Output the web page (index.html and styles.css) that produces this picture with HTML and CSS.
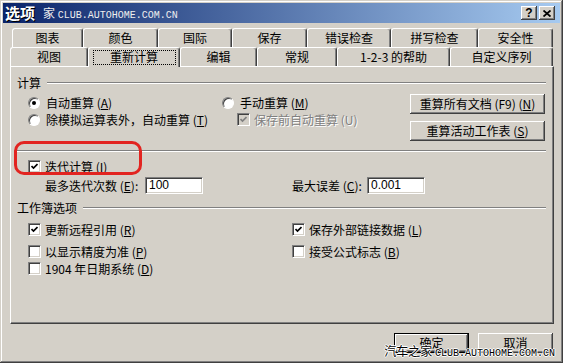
FILE: index.html
```html
<!doctype html>
<html lang="zh-CN">

<head>
    <meta charset="utf-8">
    <title>选项</title>
    <link rel="stylesheet" href="styles.css">
</head>

<body>
    <div class="dialog">
        <div class="titlebar">
            <span class="title">选项</span>
            <span class="wm-top">家 <span class="mono">CLUB.AUTOHOME.COM.CN</span></span>
            <div class="caption_btns">
                <span class="cap_btn">?</span>
                <span class="cap_btn">
                    <svg width="8" height="7" viewBox="0 0 8 7"><path d="M0.5 0.5 L7.5 6.5 M7.5 0.5 L0.5 6.5" stroke="#000" stroke-width="1.8" fill="none"/></svg>
                </span>
            </div>
        </div>

        <div class="tabs">
            <div class="tab_row row1">
                <div class="tab w71">图表</div>
                <div class="tab w75">颜色</div>
                <div class="tab w74">国际</div>
                <div class="tab w75">保存</div>
                <div class="tab w84">错误检查</div>
                <div class="tab w87">拼写检查</div>
                <div class="tab w75">安全性</div>
            </div>
            <div class="tab_row row2">
                <div class="tab w78">视图</div>
                <div class="tab w92 active"><span class="focus">重新计算</span></div>
                <div class="tab w77">编辑</div>
                <div class="tab w80">常规</div>
                <div class="tab w113">1-2-3 的帮助</div>
                <div class="tab w103">自定义序列</div>
            </div>
        </div>

        <div class="panel">
            <div class="group_title"><span>计算</span><i class="rule"></i></div>

            <div class="calc">
                <div class="col_a">
                    <div class="opt"><span class="radio on"></span>自动重算 (<u>A</u>)</div>
                    <div class="opt"><span class="radio"></span>除模拟运算表外，自动重算 (<u>T</u>)</div>
                </div>
                <div class="col_b">
                    <div class="opt"><span class="radio"></span>手动重算 (<u>M</u>)</div>
                    <div class="opt sub disabled">
                        <span class="check dis"><svg width="7" height="7" viewBox="0 0 7 7"><path d="M0.5 3 L2.5 5 L6.5 1" stroke="#808080" stroke-width="1.7" fill="none"/></svg></span>保存前自动重算 (U)
                    </div>
                </div>
                <div class="col_c">
                    <button class="btn">重算所有文档 (F9) (<u>N</u>)</button>
                    <button class="btn">重算活动工作表 (<u>S</u>)</button>
                </div>
            </div>

            <div class="sep"></div>

            <div class="iter">
                <div class="opt"><span class="check"><svg width="7" height="7" viewBox="0 0 7 7"><path d="M0.5 3 L2.5 5 L6.5 1" stroke="#000" stroke-width="1.7" fill="none"/></svg></span>迭代计算 (<u>I</u>)</div>
            </div>

            <div class="fields">
                <div class="field indent">
                    <span class="fld_label lw100">最多迭代次数 (<u>E</u>):</span>
                    <span class="input">100</span>
                </div>
                <div class="field">
                    <span class="fld_label lw75">最大误差 (<u>C</u>):</span>
                    <span class="input">0.001</span>
                </div>
            </div>

            <div class="group_title second"><span>工作簿选项</span><i class="rule"></i></div>

            <div class="book">
                <div class="opt"><span class="check"><svg width="7" height="7" viewBox="0 0 7 7"><path d="M0.5 3 L2.5 5 L6.5 1" stroke="#000" stroke-width="1.7" fill="none"/></svg></span>更新远程引用 (<u>R</u>)</div>
                <div class="opt"><span class="check"><svg width="7" height="7" viewBox="0 0 7 7"><path d="M0.5 3 L2.5 5 L6.5 1" stroke="#000" stroke-width="1.7" fill="none"/></svg></span>保存外部链接数据 (<u>L</u>)</div>
                <div class="opt"><span class="check"></span>以显示精度为准 (<u>P</u>)</div>
                <div class="opt"><span class="check"></span>接受公式标志 (<u>B</u>)</div>
                <div class="opt"><span class="check"></span>1904 年日期系统 (<u>D</u>)</div>
            </div>

            <div class="mark"></div>
        </div>

        <div class="footer">
            <button class="btn small default">确定</button>
            <button class="btn small">取消</button>
        </div>

        <div class="wm-bottom">汽车之家 <span class="mono">CLUB.AUTOHOME.COM.CN</span></div>
    </div>
</body>

</html>
```

FILE: styles.css
```css
/* Classic Windows options dialog */
* {
    box-sizing: border-box;
}

body {
    margin: 0;
    font-family: "Noto Sans CJK SC", sans-serif;
    font-size: 12px;
    color: #000;
    background: #d4d0c8;
}

.dialog {
    position: relative;
    width: 563px;
    height: 363px;
    padding: 3px;
    background: #d4d0c8;
    box-shadow: inset -1px -1px #404040, inset 1px 1px #d4d0c8, inset -2px -2px #808080, inset 2px 2px #fff;
}

.titlebar {
    position: relative;
    height: 20px;
    display: flex;
    align-items: center;
    padding: 0 5px 0 2px;
    background: linear-gradient(to right, #0a246a, #a6caf0);
    color: #fff;
}

.title {
    position: relative;
    z-index: 1;
    font-weight: bold;
    font-size: 15px;
    line-height: 20px;
    text-shadow: 1px 1px #000;
}

.wm-top {
    position: absolute;
    left: 40px;
    top: 3px;
    line-height: 14px;
    color: #eeeeee;
}

.mono {
    font-family: "Liberation Mono", monospace;
    font-size: 10px;
}

.caption_btns {
    margin-left: auto;
    display: flex;
    gap: 2px;
}

.cap_btn {
    width: 16px;
    height: 14px;
    display: flex;
    align-items: center;
    justify-content: center;
    background: #d4d0c8;
    box-shadow: inset -1px -1px #404040, inset 1px 1px #fff, inset -2px -2px #808080;
    color: #000;
    font: bold 12px "Liberation Sans", sans-serif;
}

/* tabs */
.tabs {
    margin: 5px 6px 0 7px;
}

.tab_row {
    display: flex;
    align-items: flex-start;
    height: 19px;
}

.row1 {
    padding-left: 2px;
}

.row2 {
    position: relative;
    z-index: 2;
}

.tab {
    height: 19px;
    display: flex;
    align-items: center;
    justify-content: center;
    line-height: 14px;
    white-space: nowrap;
    background: #d4d0c8;
    border-top: 1px solid #fff;
    border-left: 1px solid #fff;
    border-right: 1px solid #404040;
    border-radius: 3px 3px 0 0;
    box-shadow: inset -1px 0 #808080;
}

.tab.active {
    height: 20px;
    margin-bottom: -1px;
    padding-bottom: 1px;
}

.focus {
    width: 83px;
    height: 15px;
    display: flex;
    align-items: center;
    justify-content: center;
    border: 1px dotted #000;
}

.w71 { width: 71px; }
.w74 { width: 74px; }
.w75 { width: 75px; }
.w77 { width: 77px; }
.w78 { width: 78px; }
.w80 { width: 80px; }
.w84 { width: 84px; }
.w87 { width: 87px; }
.w92 { width: 92px; }
.w103 { width: 103px; }
.w113 { width: 113px; }

/* panel */
.panel {
    position: relative;
    z-index: 1;
    height: 258px;
    margin: 0 6px 0 7px;
    padding: 9px 7px 0 6px;
    border: 1px solid;
    border-color: #fff #404040 #404040 #fff;
    box-shadow: inset -1px -1px #808080;
}

.group_title {
    display: flex;
    align-items: center;
    gap: 6px;
    height: 14px;
    line-height: 14px;
}

.group_title.second {
    margin-top: 7px;
}

.rule {
    flex: 1;
    height: 2px;
    border-top: 1px solid #808080;
    border-bottom: 1px solid #fff;
}

.sep {
    margin: 9px 0 0 -3px;
    height: 2px;
    border-top: 1px solid #808080;
    border-bottom: 1px solid #fff;
}

.calc {
    display: flex;
    margin-top: 4px;
    padding-left: 11px;
}

.col_a {
    width: 194px;
}

.col_b {
    width: 188px;
}

.col_c {
    width: 135px;
    display: flex;
    flex-direction: column;
    gap: 7px;
}

.opt {
    display: flex;
    align-items: center;
    height: 17px;
    line-height: 14px;
    white-space: nowrap;
}

.opt.sub {
    padding-left: 15px;
}

.disabled {
    color: #808080;
    text-shadow: 1px 1px #fff;
}

.radio {
    position: relative;
    width: 12px;
    height: 12px;
    margin-right: 6px;
    border-radius: 50%;
    background: #fff;
    border: 1px solid;
    border-color: #808080 #fff #fff #808080;
    box-shadow: inset 1px 1px #404040;
}

.radio.on::after {
    content: "";
    position: absolute;
    left: 3px;
    top: 3px;
    width: 4px;
    height: 4px;
    border-radius: 50%;
    background: #000;
}

.check {
    width: 13px;
    height: 13px;
    margin-right: 4px;
    display: flex;
    align-items: center;
    justify-content: center;
    background: #fff;
    border: 1px solid;
    border-color: #808080 #fff #fff #808080;
    box-shadow: inset 1px 1px #404040, inset -1px -1px #d4d0c8;
}

.check.dis {
    background: #d4d0c8;
}

.btn {
    width: 135px;
    height: 20px;
    padding: 0;
    border: none;
    background: #d4d0c8;
    font: inherit;
    line-height: 14px;
    color: #000;
    box-shadow: inset -1px -1px #404040, inset 1px 1px #fff, inset -2px -2px #808080;
}

.iter {
    margin-top: 6px;
    padding-left: 11px;
}

.fields {
    display: grid;
    grid-template-columns: 264px auto;
    margin-top: 2px;
    padding-left: 11px;
}

.field {
    display: flex;
    align-items: center;
    height: 17px;
    line-height: 14px;
    white-space: nowrap;
}

.field.indent {
    padding-left: 17px;
}

.lw100 { width: 100px; }
.lw75 { width: 75px; }

.input {
    width: 58px;
    height: 17px;
    padding: 1px 3px;
    background: #fff;
    border: 1px solid;
    border-color: #808080 #fff #fff #808080;
    box-shadow: inset 1px 1px #404040, inset -1px -1px #d4d0c8;
    font-family: "Liberation Sans", sans-serif;
    font-size: 12px;
    line-height: 13px;
}

.book {
    display: grid;
    grid-template-columns: 264px auto;
    grid-template-rows: 22px 17px 17px;
    margin-top: 6px;
    padding-left: 11px;
}

.mark {
    position: absolute;
    left: 3px;
    top: 74px;
    width: 128px;
    height: 34px;
    border: 3px solid #e22420;
    border-radius: 10px;
}

/* footer */
.footer {
    display: flex;
    justify-content: flex-end;
    gap: 9px;
    margin-top: 9px;
    padding-right: 7px;
}

.btn.small {
    width: 75px;
}

.btn.default {
    box-shadow: inset 0 0 0 1px #000, inset -2px -2px #404040, inset 2px 2px #fff, inset -3px -3px #808080;
}

.wm-bottom {
    position: absolute;
    right: 8px;
    bottom: 2px;
    line-height: 14px;
    color: #000;
    text-shadow: 1px 0 #fff, 0 1px #fff, -1px 0 #fff, 0 -1px #fff;
}
```
